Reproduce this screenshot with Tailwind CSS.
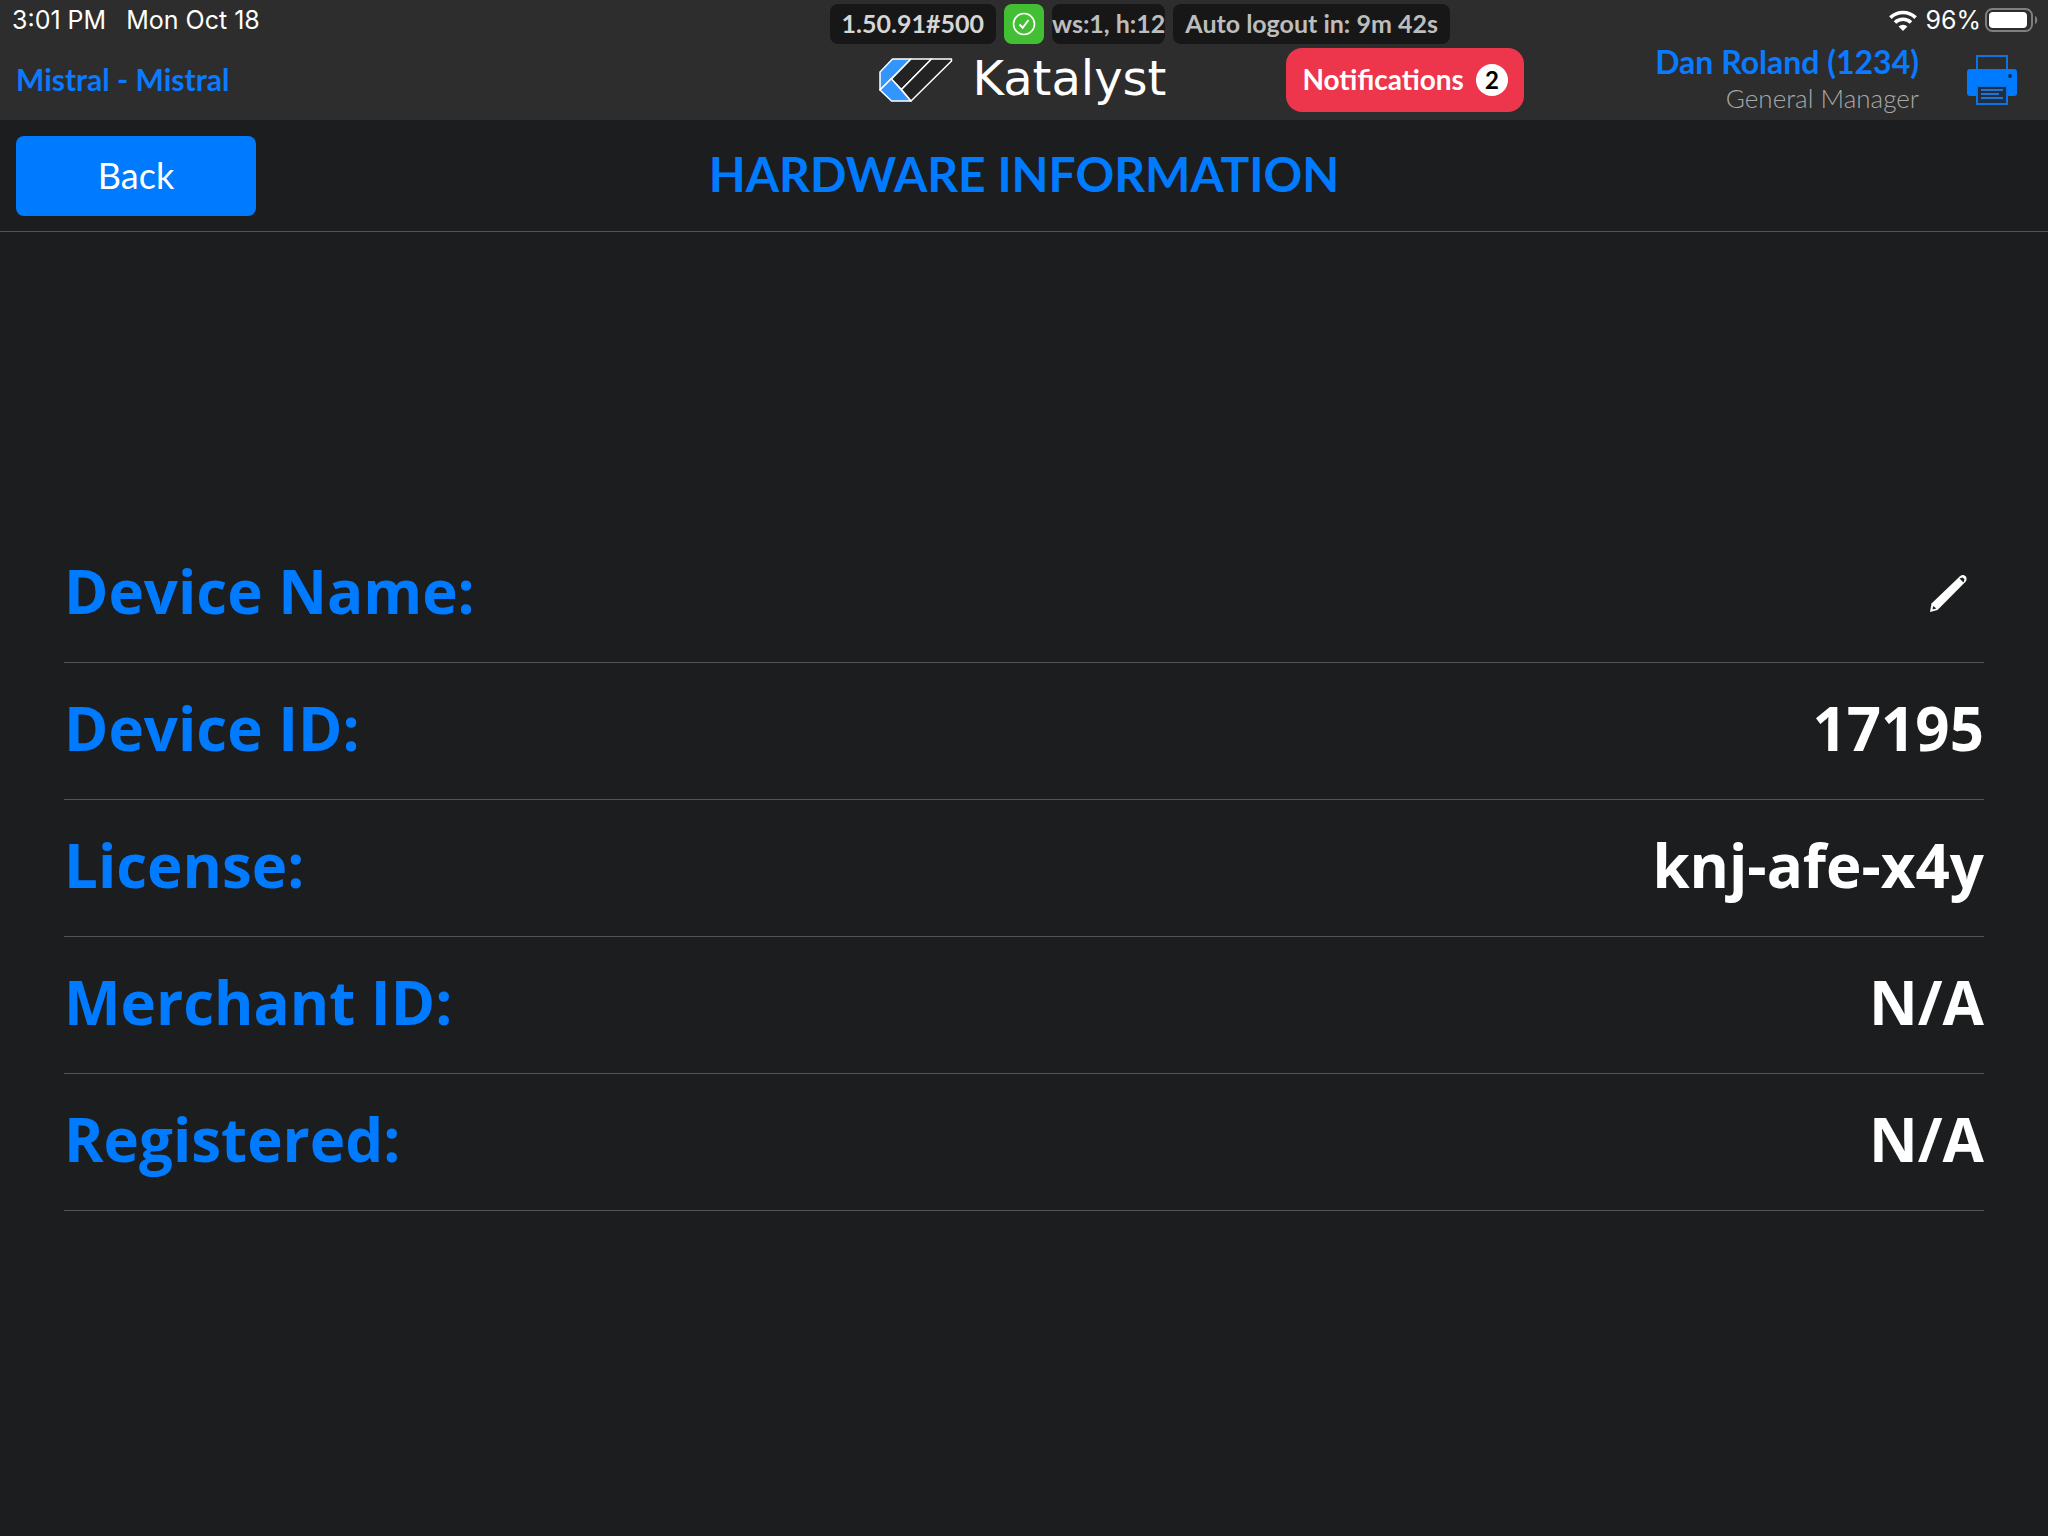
<!DOCTYPE html>
<html lang="en">
<head>
  <meta charset="UTF-8">
  <meta name="viewport" content="width=device-width, initial-scale=1.0">
  <title>Hardware Information</title>
  <script src="https://cdn.jsdelivr.net/npm/@tailwindcss/browser@4"></script>
</head>
<body class="min-h-screen flex flex-col bg-[#1b1d1e] font-['Lato',sans-serif] text-white">
  <header class="bg-[#2d2d2d]">
    <!-- Status bar -->
    <div class="grid grid-cols-[1fr_auto_1fr] gap-2 h-10 pt-1 px-2.5 whitespace-nowrap">
      <div class="flex justify-between">
        <div class="flex gap-5 pl-0.5 font-['Inter',sans-serif] text-[25px] leading-8">
          <span>3:01 PM</span>
          <span>Mon Oct 18</span>
        </div>
        <span class="h-10 px-3 rounded-lg bg-[#171717] text-[25px] leading-[38px] font-bold text-[#d6d6d6]">1.50.91#500</span>
      </div>
      <span class="flex items-center justify-center size-10 rounded-lg bg-[#43bf33]">
        <svg class="size-6" viewBox="0 0 24 24" fill="none" stroke="currentColor" stroke-width="2">
          <circle cx="12" cy="12" r="10.5" stroke-width="1.6" />
          <path d="M7.5 12.5l3.2 3.3 5.8-7.8" />
        </svg>
      </span>
      <div class="flex gap-2">
        <span class="h-10 rounded-lg bg-[#171717] text-[25px] leading-[38px] font-bold text-[#bdbdbd]">ws:1, h:12</span>
        <span class="h-10 px-3 rounded-lg bg-[#171717] text-[25px] leading-[38px] font-bold text-[#bdbdbd]">Auto logout in: 9m 42s</span>
        <div class="flex items-center gap-1 h-8 ml-auto font-['Inter',sans-serif] text-[25px] leading-8">
          <svg class="w-7 h-[21px] mr-1" viewBox="0 0 28 21" fill="none" stroke="currentColor" stroke-width="3.6">
            <path d="M1.4 7.6a18 18 0 0 1 25.2 0" />
            <path d="M6 12.5a11.6 11.6 0 0 1 16 0" />
            <path d="M14 21l-4.400-4.500a6.300 6.300 0 0 1 8.800 0z" fill="currentColor" stroke="none" />
          </svg>
          <span>96%</span>
          <svg class="w-[53px] h-6" viewBox="0 0 53 24">
            <rect x="1" y="1" width="46" height="22" rx="6.5" fill="none" stroke="#7f7f7f" stroke-width="2" />
            <rect x="4" y="4" width="38" height="16" rx="4" fill="#fff" />
            <path d="M50 8c3 1 3 7 0 8z" fill="#7f7f7f" />
          </svg>
        </div>
      </div>
    </div>
    <!-- App bar -->
    <div class="grid grid-cols-[1fr_auto_1fr] items-center h-20 pl-4 pr-[31px] whitespace-nowrap">
      <div class="pb-0.5">
        <a href="#" class="text-3xl font-bold text-[#0a7aff]">Mistral - Mistral</a>
      </div>
      <div class="flex items-center gap-5 pl-3">
        <svg class="w-[74px] h-11" viewBox="0 0 74 44" stroke="#fff" stroke-width="1.5" stroke-linejoin="round">
          <path d="M13.5 1H32L1 32V14z" fill="#3396ff" />
          <path d="M12.500 20.500L1 32l11.500 11H32z" fill="#3396ff" />
          <path d="M32 1H52.500L22.500 31.500 12.500 21z" fill="#232323" />
          <path d="M52.500 1H72.500V3L32 43 22.500 31.500z" fill="#232323" />
        </svg>
        <span class="pb-1 font-['DejaVu_Sans',sans-serif] text-5xl leading-11">Katalyst</span>
      </div>
      <div class="flex items-center justify-between pl-30">
        <button type="button" class="flex items-center gap-3 h-16 px-4 rounded-2xl bg-[#ed364b] text-[28px] leading-8 font-bold">
          <span class="pb-0.5">Notifications</span>
          <span class="flex items-center justify-center size-8 rounded-full bg-white text-2xl text-black">2</span>
        </button>
        <div class="flex items-center gap-12">
          <div class="text-right">
            <a href="#" class="block text-[32px] leading-9 font-bold text-[#0a7aff]">Dan Roland (1234)</a>
            <p class="text-[26px] leading-9 font-light text-[#a8a8a8]">General Manager</p>
          </div>
          <button type="button" aria-label="Print">
            <svg class="block size-[50px]" viewBox="0 0 50 50">
              <path d="M3 14h44a3 3 0 0 1 3 3v21a3 3 0 0 1-3 3H3a3 3 0 0 1-3-3V17a3 3 0 0 1 3-3z" fill="#007aff" />
              <path d="M10 14V1h30v13" fill="none" stroke="#0f72dd" stroke-width="2" />
              <circle cx="43" cy="21" r="2" fill="#1c2f4d" />
              <rect x="10" y="31" width="30" height="18" fill="#1d2f45" stroke="#0f72dd" stroke-width="2" />
              <path d="M14 35h22M14 39h18M14 43h22" stroke="#2474cf" stroke-width="2" />
            </svg>
          </button>
        </div>
      </div>
    </div>
  </header>

  <div class="grid grid-cols-[1fr_auto_1fr] items-center h-28 px-4 border-b border-[#545556]">
    <button type="button" class="w-60 h-20 pb-0.5 rounded-lg bg-[#007aff] text-4xl">Back</button>
    <h1 class="pb-1 text-5xl font-bold text-[#007aff]">HARDWARE INFORMATION</h1>
  </div>

  <main class="flex-1 flex flex-col justify-center px-16 pb-[31px]">
    <dl class="font-['Open_Sans',sans-serif] text-6xl font-bold">
      <div class="flex items-center justify-between h-[137px] border-b border-[#545556]">
        <dt class="pb-1.5 text-[#007aff]">Device Name:</dt>
        <dd class="flex pr-4">
          <button type="button" aria-label="Edit device name">
            <svg class="block size-10" viewBox="0 0 40 40">
              <path d="M2 38l1.500-8.500L32 2.200c2-1.700 4-1.500 5.500 0s1.500 3.500 0 5.500L9.500 36z" fill="#fff" />
              <path d="M31.500 4.500l4 4 1-3.200-1.800-1.800z" fill="#1b1d1e" />
              <path d="M4.500 35.500l.8-3.500 3 2.500z" fill="#1b1d1e" />
            </svg>
          </button>
        </dd>
      </div>
      <div class="flex items-center justify-between h-[137px] pb-1.5 border-b border-[#545556]">
        <dt class="text-[#007aff]">Device ID:</dt>
        <dd>17195</dd>
      </div>
      <div class="flex items-center justify-between h-[137px] pb-1.5 border-b border-[#545556]">
        <dt class="text-[#007aff]">License:</dt>
        <dd>knj-afe-x4y</dd>
      </div>
      <div class="flex items-center justify-between h-[137px] pb-1.5 border-b border-[#545556]">
        <dt class="text-[#007aff]">Merchant ID:</dt>
        <dd>N/A</dd>
      </div>
      <div class="flex items-center justify-between h-[137px] pb-1.5 border-b border-[#545556]">
        <dt class="text-[#007aff]">Registered:</dt>
        <dd>N/A</dd>
      </div>
    </dl>
  </main>
</body>
</html>
